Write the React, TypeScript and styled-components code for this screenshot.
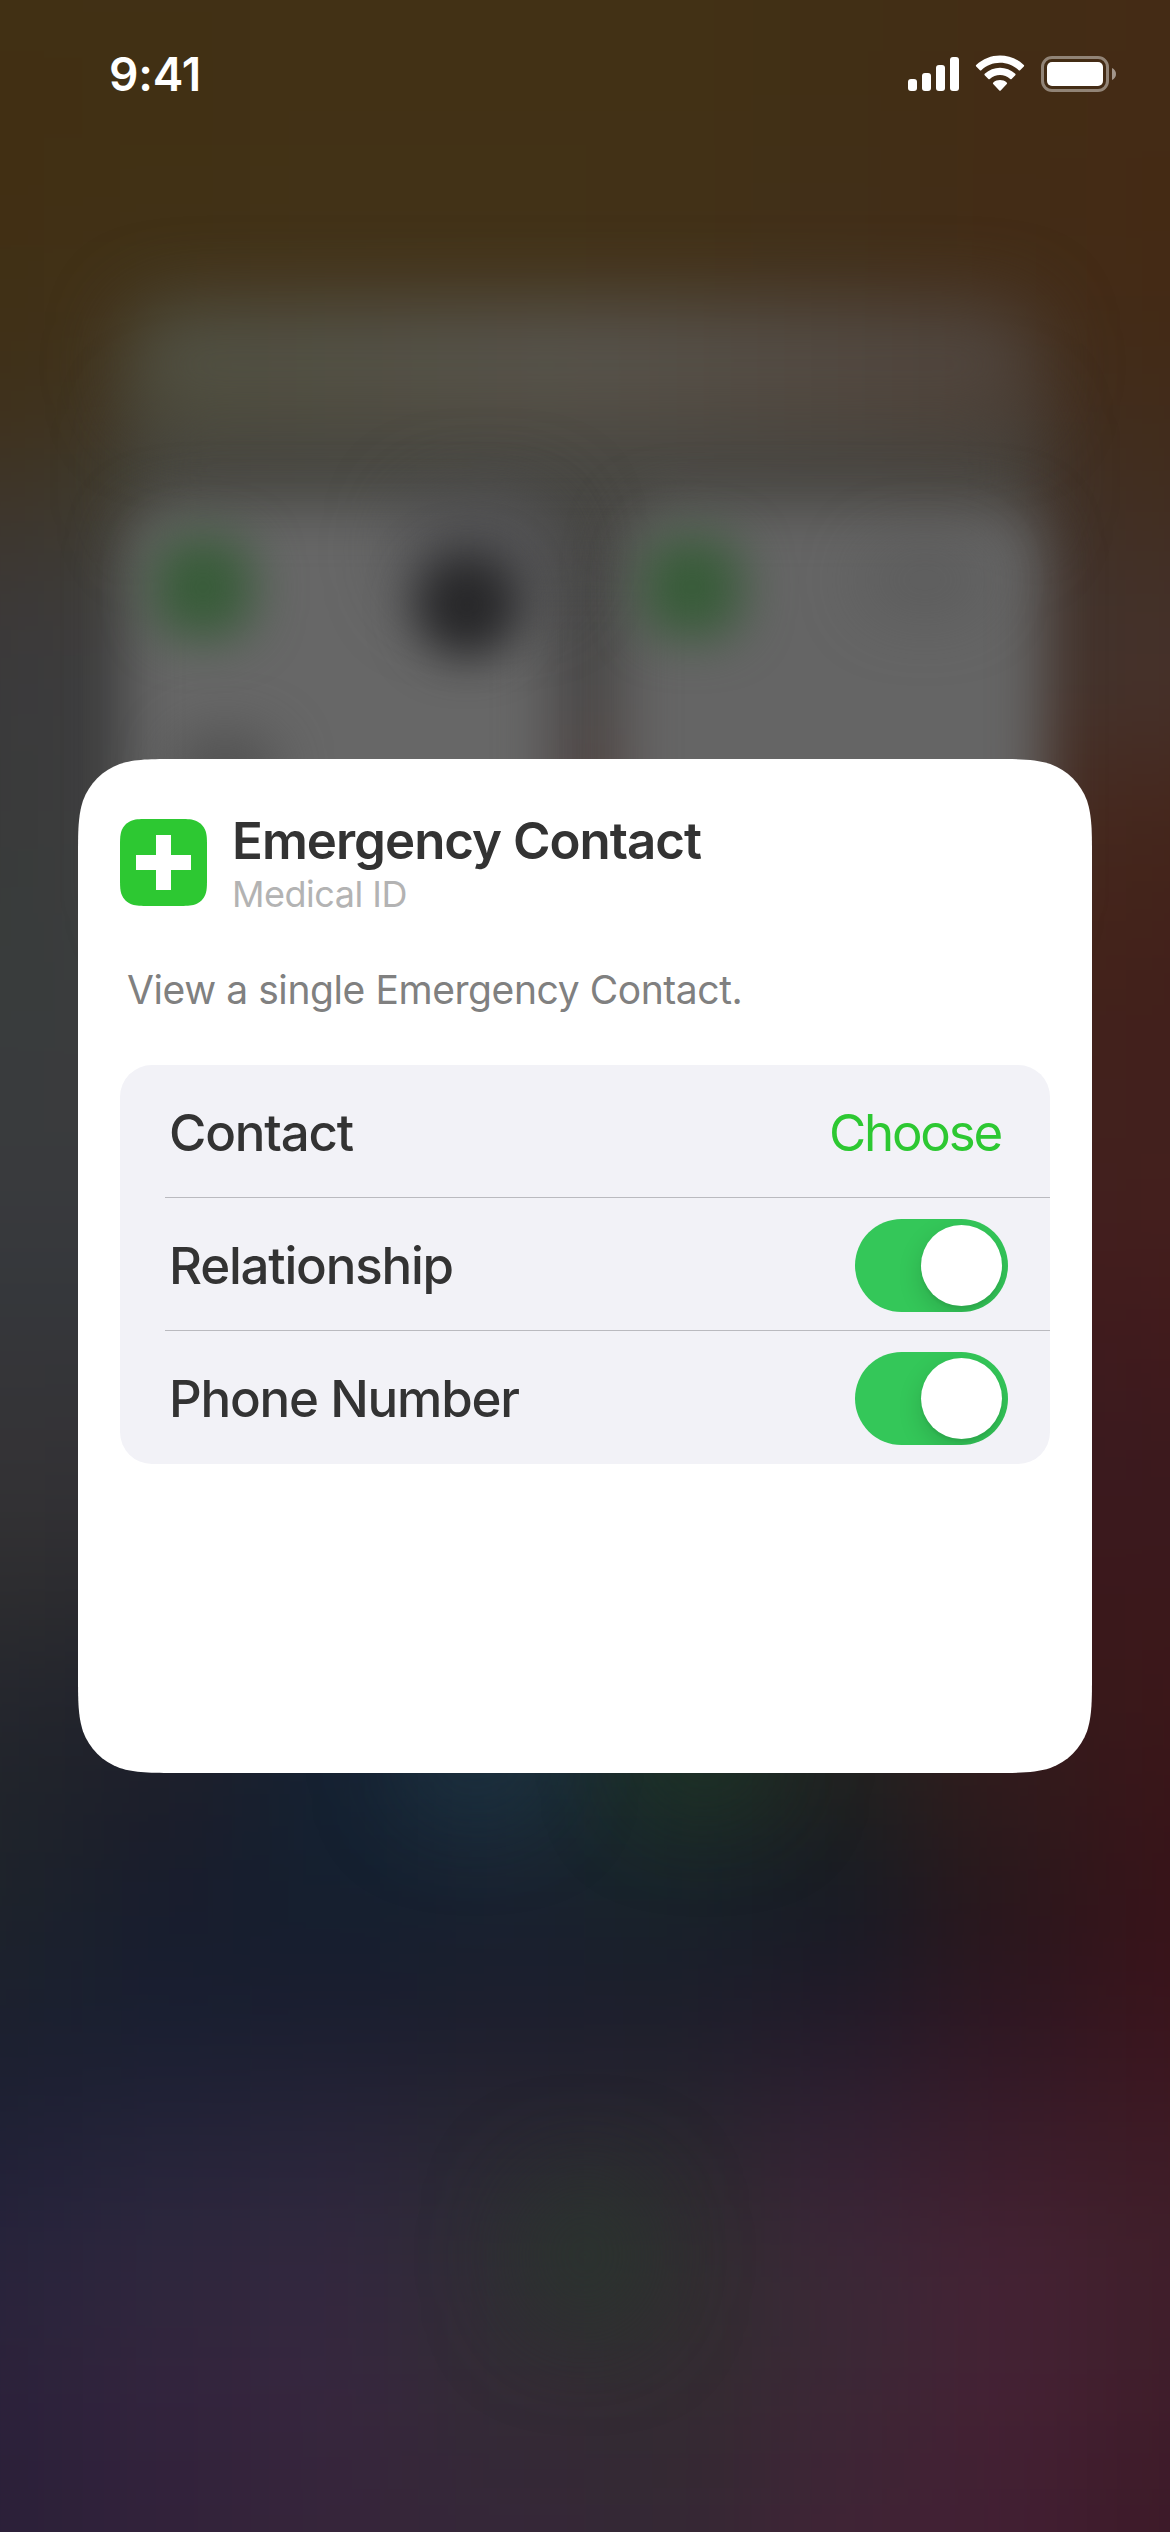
import React from "react";
import styled, { createGlobalStyle } from "styled-components";

const Global = createGlobalStyle`
  html, body { margin: 0; padding: 0; background: #1c1f2c; }
  * { box-sizing: border-box; }
`;

const Screen = styled.main`
  position: relative;
  width: 1170px;
  height: 2532px;
  overflow: hidden;
  display: flex;
  flex-direction: column;
  font-family: Inter, "Liberation Sans", sans-serif;
`;

/* Wallpaper: a coarse colour mesh, softened. One row per 100px, centred on 0, 100, 200... */
const mesh = [
  ["#413014", "#413015", "#423115", "#423115", "#423115", "#412f15", "#432d15", "#442b15"],
  ["#412f13", "#413013", "#423115", "#423115", "#423115", "#412f15", "#432c14", "#442b15"],
  ["#412f13", "#413115", "#423217", "#423217", "#423117", "#412f18", "#432c16", "#442a14"],
  ["#403016", "#423219", "#43331a", "#43331a", "#43321a", "#43301b", "#432d18", "#442a15"],
  ["#3f3019", "#403523", "#43392a", "#463b2d", "#463b2e", "#44372c", "#423022", "#412b19"],
  ["#3e352a", "#3f3f32", "#444641", "#484744", "#484644", "#46403b", "#40332b", "#412d1f"],
  ["#3c3838", "#3e3f3c", "#454645", "#464645", "#464645", "#454341", "#413530", "#433028"],
  ["#3a3a3c", "#3f3f40", "#4a4a4a", "#4a4a4b", "#4d4b4a", "#4a4645", "#44362f", "#46312a"],
  ["#393939", "#404040", "#555555", "#524a48", "#574340", "#504a48", "#462d22", "#45261c"],
  ["#383c3b", "#404040", "#505050", "#504846", "#524340", "#4a4442", "#45271c", "#43231a"],
  ["#383c3c", "#3a3d3d", "#444444", "#444444", "#444444", "#444040", "#43251c", "#421f1b"],
  ["#3a3b3e", "#3a3b3e", "#3d3d3d", "#3d3d3d", "#3d3d3d", "#403530", "#42221e", "#42201d"],
  ["#393a3d", "#393a3d", "#3a3a3a", "#383838", "#383838", "#3b302c", "#43211f", "#43201e"],
  ["#34373b", "#34373b", "#333537", "#2e3232", "#2d3230", "#362c2a", "#3f1c20", "#421b1b"],
  ["#353437", "#353437", "#303236", "#283238", "#27322e", "#302a26", "#3a1c20", "#3e1a1d"],
  ["#333235", "#313034", "#262c35", "#24333c", "#24352c", "#2c2822", "#3a1a1e", "#3a191e"],
  ["#2c2c2e", "#2a2a2f", "#1c2635", "#1d303e", "#1d322c", "#272622", "#3a181c", "#3c181b"],
  ["#24262e", "#20222b", "#162234", "#1c2f3d", "#1d3129", "#222421", "#351a1c", "#3b1719"],
  ["#20242a", "#1c1d2a", "#142131", "#192a38", "#1a2a27", "#1f2120", "#2f1b1c", "#391519"],
  ["#1d232b", "#181d2d", "#141f2f", "#18212f", "#17222a", "#151b25", "#29171b", "#371319"],
  ["#1b202e", "#181e30", "#191d2e", "#1b1d2d", "#1c1d2b", "#211a28", "#2d1621", "#3a141b"],
  ["#1d2032", "#202135", "#232235", "#252330", "#25232e", "#2d1f30", "#351a28", "#3c1822"],
  ["#24223a", "#2a263c", "#2e273d", "#2d2b34", "#2e2c30", "#392436", "#40202f", "#3f1e28"],
  ["#2a243b", "#30273e", "#34283e", "#312d35", "#302e30", "#3b2937", "#452336", "#401f2b"],
  ["#2c213a", "#33233d", "#37263e", "#332b35", "#332b31", "#3b2735", "#442133", "#3f1d2a"],
  ["#2b2039", "#32223a", "#36253a", "#352738", "#342834", "#3f2435", "#421f33", "#3d1a28"],
  ["#2b2039", "#32223a", "#36253a", "#352738", "#342834", "#3f2435", "#421f33", "#3d1a28"],
];

/* Outline of a square with continuous-curvature corners. */
const corner: [number, number][] = [
  [1.5287, 0],
  [1.0885, 0],
  [0.8684, 0],
  [0.6315, 0.0749],
  [0.3728, 0.1691],
  [0.1691, 0.3728],
  [0.0749, 0.6315],
  [0, 0.8684],
  [0, 1.0885],
  [0, 1.5287],
];

function smoothSquare(size: number, r: number) {
  const tl = corner.map(([x, y]) => [x * r, y * r]);
  const back = [...tl].reverse();
  const corners = [
    tl,
    back.map(([x, y]) => [x, size - y]),
    tl.map(([x, y]) => [size - x, size - y]),
    back.map(([x, y]) => [size - x, y]),
  ];
  return (
    corners
      .map((pts, i) => {
        const [start, ...rest] = pts.map((p) => p.map((n) => n.toFixed(2)).join(" "));
        return `${i === 0 ? "M" : "L"}${start}C${rest.join(" ")}`;
      })
      .join("") + "Z"
  );
}

const Backdrop = styled.div`
  position: absolute;
  inset: 0;
  overflow: hidden;
  background: #2a2230;
`;

const Mesh = styled.div`
  position: absolute;
  top: -50px;
  left: -84px;
  width: 1338px;
  display: grid;
  grid-template-columns: repeat(8, 1fr);
  grid-auto-rows: 100px;
  filter: blur(58px);
`;

const Swatch = styled.i<{ $c: string }>`
  background: ${(p) => p.$c};
  &:nth-child(8n + 1) { margin-left: -160px; }
  &:nth-child(8n) { margin-right: -160px; }
  &:nth-child(-n + 8) { margin-top: -160px; }
  &:nth-last-child(-n + 8) { margin-bottom: -160px; }
`;

const Glow = styled.div<{ $x: number; $y: number; $w: number; $h: number; $c: string; $blur: number; $r?: number }>`
  position: absolute;
  left: ${(p) => p.$x}px;
  top: ${(p) => p.$y}px;
  width: ${(p) => p.$w}px;
  height: ${(p) => p.$h}px;
  background: ${(p) => p.$c};
  border-radius: ${(p) => p.$r ?? 50}px;
  filter: blur(${(p) => p.$blur}px);
`;

const StatusBar = styled.header`
  position: relative;
  height: 150px;
  flex: none;
  display: flex;
  justify-content: space-between;
  align-items: flex-start;
  padding: 46px 54px 0 109px;
`;

const Clock = styled.time`
  color: #fff;
  font-size: 46px;
  line-height: 56px;
  font-weight: 600;
  letter-spacing: -0.2px;
`;

const StatusIcons = styled.svg`
  display: block;
  margin-top: 7px;
`;

const Card = styled.section`
  position: relative;
  width: 1014px;
  height: 1014px;
  margin: 609px auto 0;
  padding: 60px 42px 0;
  display: flex;
  flex-direction: column;
`;

const CardShape = styled.svg`
  position: absolute;
  inset: 0;
`;

const Head = styled.div`
  position: relative;
  display: flex;
  gap: 25px;
  height: 87px;
`;

const Titles = styled.div`
  display: flex;
  flex-direction: column;
`;

const Title = styled.h1`
  margin: -9px 0 0;
  font-size: 51px;
  line-height: 62px;
  font-weight: 600;
  color: #333;
  letter-spacing: -1px;
  white-space: nowrap;
`;

const Subtitle = styled.span`
  font-size: 36px;
  line-height: 44px;
  letter-spacing: -0.5px;
  color: #b3b3b3;
  white-space: nowrap;
`;

const Description = styled.p`
  position: relative;
  margin: 60px 0 0 7px;
  font-size: 39px;
  line-height: 48px;
  letter-spacing: -0.42px;
  color: #808080;
  white-space: nowrap;
`;

const List = styled.div`
  position: relative;
  margin-top: 51px;
  border-radius: 32px;
  background: #f2f2f7;
  display: flex;
  flex-direction: column;
  overflow: hidden;
`;

const Row = styled.div<{ $last?: boolean }>`
  height: 133px;
  margin-left: 45px;
  padding: ${(p) => (p.$last ? "1px" : "2px")} 42px 0 4px;
  border-bottom: ${(p) => (p.$last ? "none" : "1px solid #bababf")};
  display: flex;
  align-items: center;
  justify-content: space-between;
`;

const Label = styled.span`
  padding-top: 2px;
  font-size: 51px;
  line-height: 62px;
  font-weight: 500;
  letter-spacing: -1.2px;
  color: #333;
  white-space: nowrap;
`;

const Choose = styled.button`
  all: unset;
  padding-top: 2px;
  margin-right: 7px;
  font-size: 51px;
  line-height: 62px;
  letter-spacing: -2.2px;
  color: #2dc832;
  white-space: nowrap;
`;

const Switch = styled.div`
  width: 153px;
  height: 93px;
  padding: 6px;
  border-radius: 47px;
  background: #34c759;
  display: flex;
  justify-content: flex-end;
  overflow: hidden;
`;

const Knob = styled.span`
  width: 81px;
  height: 81px;
  border-radius: 50%;
  background: #fff;
  box-shadow: 0 9px 24px rgba(0, 0, 0, 0.15), 0 3px 3px rgba(0, 0, 0, 0.06);
`;

export default function App() {
  return (
    <Screen>
      <Global />
      <Backdrop>
        <Mesh>
          {mesh.flatMap((row, y) => row.map((c, x) => <Swatch key={`${y}-${x}`} $c={c} />))}
        </Mesh>
        <Glow $x={130} $y={390} $w={910} $h={160} $c="rgba(73,73,70,.75)" $blur={34} />
        <Glow $x={125} $y={302} $w={915} $h={126} $c="linear-gradient(90deg,#4f4f40,#57534b 50%,#4e423a)" $blur={36} />
        <Glow $x={125} $y={506} $w={425} $h={440} $c="#676767" $blur={27} />
        <Glow $x={624} $y={506} $w={420} $h={440} $c="#656565" $blur={27} />
        <Glow $x={400} $y={490} $w={170} $h={120} $c="rgba(70,70,73,.6)" $blur={36} />
        <Glow $x={860} $y={540} $w={130} $h={80} $c="rgba(82,82,82,.4)" $blur={30} />
        <Glow $x={170} $y={730} $w={110} $h={80} $c="rgba(70,70,70,.6)" $blur={26} />
        <Glow $x={153} $y={536} $w={100} $h={102} $c="#385c39" $blur={24} $r={34} />
        <Glow $x={642} $y={536} $w={100} $h={102} $c="#385c39" $blur={24} $r={34} />
        <Glow $x={415} $y={553} $w={104} $h={104} $c="#272729" $blur={23} />
        <Glow $x={400} $y={1700} $w={150} $h={120} $c="rgba(30,54,70,.4)" $blur={44} />
        <Glow $x={630} $y={1700} $w={150} $h={120} $c="rgba(30,56,38,.45)" $blur={44} />
        <Glow $x={520} $y={2175} $w={130} $h={160} $c="rgba(41,52,45,.8)" $blur={46} $r={65} />
      </Backdrop>

      <StatusBar>
        <Clock>9:41</Clock>
        <StatusIcons width="209" height="40" viewBox="906 53 209 40" fill="#fff">
          <rect x="907" y="79" width="9" height="12" rx="3" />
          <rect x="921" y="73" width="9" height="18" rx="3" />
          <rect x="935" y="65" width="9" height="26" rx="3" />
          <rect x="949" y="57" width="9" height="34" rx="3" />
          <path d="M999 62.700C1006 62.700 1012.700 65.400 1017.700 70.200Q1018.400 70.900 1019.100 70.200L1022.800 66.500Q1023.500 65.700 1022.800 65C1009.500 52.200 988.500 52.200 975.200 65Q974.500 65.700 975.200 66.500L978.900 70.200Q979.600 70.900 980.300 70.200C985.300 65.400 992 62.700 999 62.700Z" />
          <path d="M999 75C1002.700 75 1006.400 76.400 1009.200 78.900Q1009.900 79.600 1010.600 78.900L1014.300 75.200Q1015 74.400 1014.300 73.700C1005.700 65.700 992.300 65.700 983.700 73.700Q983 74.400 983.700 75.200L987.400 78.900Q988.100 79.600 988.800 78.900C991.600 76.400 995.300 75 999 75Z" />
          <path d="M1005.800 83.900Q1006.500 83.200 1005.700 82.500C1001.900 79.300 996.100 79.300 992.300 82.500Q991.500 83.200 992.200 83.900L998.300 90.400Q999 91.100 999.700 90.400Z" />
          <rect x="1041.500" y="57.500" width="65" height="33" rx="9.500" fill="none" stroke="#fff" strokeOpacity=".42" strokeWidth="3" />
          <path d="M1111 68v12c2.500-1 4-3.400 4-6s-1.500-5-4-6z" fillOpacity=".5" />
          <rect x="1046" y="62" width="56" height="24" rx="5" />
        </StatusIcons>
      </StatusBar>

      <Card>
        <CardShape width="1014" height="1014" viewBox="0 0 1014 1014" aria-hidden="true">
          <path fill="#fff" d={smoothSquare(1014, 66)} />
        </CardShape>
        <Head>
          <svg width="87" height="87" viewBox="0 0 87 87" aria-hidden="true">
            <path fill="#2dc832" d={smoothSquare(87, 19)} />
            <path fill="#fff" d="M36 16H51V36H71V51H51V71H36V51H16V36H36Z" />
          </svg>
          <Titles>
            <Title>Emergency Contact</Title>
            <Subtitle>Medical ID</Subtitle>
          </Titles>
        </Head>
        <Description>View a single Emergency Contact.</Description>
        <List>
          <Row>
            <Label>Contact</Label>
            <Choose>Choose</Choose>
          </Row>
          <Row>
            <Label>Relationship</Label>
            <Switch>
              <Knob />
            </Switch>
          </Row>
          <Row $last>
            <Label>Phone Number</Label>
            <Switch>
              <Knob />
            </Switch>
          </Row>
        </List>
      </Card>
    </Screen>
  );
}
